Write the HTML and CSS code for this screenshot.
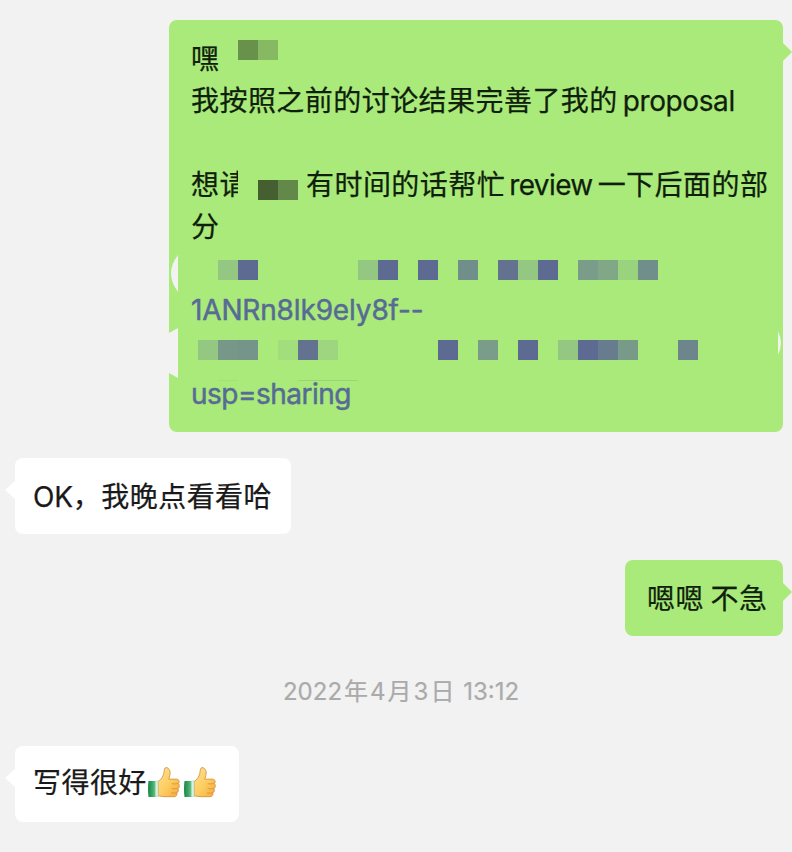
FILE: index.html
```html
<!DOCTYPE html>
<html lang="zh-CN">
<head>
<meta charset="utf-8">
<title>聊天</title>
<link rel="stylesheet" href="styles.css">
</head>
<body>
<main class="chat">
  <section class="row sent">
    <div class="bubble long">
      <p>嘿</p>
      <p>我按照之前的讨论结果完善了我的<span class="latin proposal">proposal</span></p>
      <p class="blank"></p>
      <p class="ask"><span class="lead">想请</span><span>有时间的话帮忙<span class="latin review">review</span>一下后面的部</span></p>
      <p>分</p>
      <p class="blank"></p>
      <p class="link id">1ANRn8lk9ely8f--</p>
      <p class="blank"></p>
      <p class="link usp">usp=sharing</p>
      <svg class="mosaic" viewBox="169 20 614 412" aria-hidden="true">
        <g shape-rendering="crispEdges">
          <path fill="#a9ea7a" d="M238 160h20v46h-20z"/>
          <path fill="#68914b" d="M238 40h20v20h-20z"/><path fill="#86b962" d="M258 40h20v20h-20z"/>
          <path fill="#455f31" d="M258 180h20v20h-20z"/><path fill="#62894a" d="M278 180h20v20h-20z"/>
          <path fill="#93c782" d="M218 260h20v20h-20zM358 260h20v20h-20zM518 260h20v20h-20zM198 340h20v20h-20zM558 340h20v20h-20z"/>
          <path fill="#5d6b92" d="M238 260h20v20h-20zM378 260h20v20h-20zM418 260h20v20h-20zM538 260h20v20h-20zM438 340h20v20h-20zM518 340h20v20h-20zM578 340h20v20h-20z"/>
          <path fill="#63728f" d="M498 260h20v20h-20zM298 340h20v20h-20z"/>
          <path fill="#718f8a" d="M458 260h20v20h-20zM638 260h20v20h-20z"/>
          <path fill="#7a9d89" d="M578 260h20v20h-20zM478 340h20v20h-20z"/>
          <path fill="#80a887" d="M598 260h20v20h-20z"/><path fill="#9ad37e" d="M618 260h20v20h-20z"/>
          <path fill="#779889" d="M218 340h20v20h-20z"/><path fill="#75958a" d="M238 340h20v20h-20z"/>
          <path fill="#a3de7d" d="M278 340h20v20h-20z"/><path fill="#9dd67e" d="M318 340h20v20h-20z"/>
          <path fill="#677c8f" d="M598 340h20v20h-20z"/><path fill="#779a89" d="M618 340h20v20h-20z"/>
          <path fill="#6c868b" d="M678 340h20v20h-20z"/>
          <path fill="#9cd578" d="M298 380h60v1h-60z"/><path fill="#a3e07a" d="M218 380h20v1h-20z"/>
        </g>
        <path fill="#f2f2f2" d="M178 255Q164 273 178 292zM169 333L178 328V378L169 373z"/>
        <path fill="#f2f2f2" d="M778 331Q784 343 778 355z"/>
      </svg>
    </div>
  </section>

  <section class="row received">
    <div class="bubble ok"><p><span class="latin okword">OK</span>，我晚点看看哈</p></div>
  </section>

  <section class="row sent">
    <div class="bubble reply"><p>嗯嗯 不急</p></div>
  </section>

  <time class="stamp">2022<span>年</span>4<span>月</span>3<span>日</span> 13:12</time>

  <section class="row received">
    <div class="bubble praise">
      <p>写得很好</p>
      <svg class="thumb" viewBox="0 0 32 32" role="img" aria-label="赞"><use href="#thumb"/></svg>
      <svg class="thumb" viewBox="0 0 32 32" role="img" aria-label="赞"><use href="#thumb"/></svg>
    </div>
  </section>
</main>

<svg class="defs" aria-hidden="true">
  <defs>
    <linearGradient id="skin" x1="0" y1="0" x2="1" y2="1"><stop offset="0" stop-color="#ffe397"/><stop offset=".55" stop-color="#fdcc5e"/><stop offset="1" stop-color="#f4a83c"/></linearGradient>
    <linearGradient id="cuff" x1="0" y1="0" x2="1" y2="0"><stop offset="0" stop-color="#168544"/><stop offset=".65" stop-color="#44ae69"/><stop offset="1" stop-color="#78c992"/></linearGradient>
    <g id="thumb">
      <path fill="url(#skin)" stroke="#cf8b39" stroke-width=".8" d="M10 15.5C13.5 13.7 16 9.5 16.2 4.8C16.3 2.2 17.5 1.2 19 1.7C22 2.7 22.7 6 21.8 9.5L20.8 13.2L28 13.1C31.5 13.1 32 16.5 30.1 17.5C32 19 31.6 21.8 29.8 22.5C31 24 30.3 26.3 28.7 26.8C29.5 29 28.2 30.7 26 30.7H18C15 30.7 13 30.2 10 29.8z"/>
      <path fill="none" stroke="#dc953c" stroke-width=".9" stroke-linecap="round" d="M24 17.8Q27 18.4 30 17.5M24 22.6Q27 23.2 29.8 22.5M23.5 27Q26 27.5 28.7 26.8"/>
      <path fill="url(#cuff)" d="M.5 15H7.8V31H.5Q-.5 23 .5 15z"/>
      <path fill="#d9efe0" stroke="#91c99f" stroke-width=".4" d="M7.4 15H10.2V30.5H7.4z"/>
    </g>
  </defs>
</svg>
</body>
</html>
```
FILE: styles.css
```css
* { box-sizing: border-box; }

body {
  margin: 0;
  background: #f2f2f2;
  color: #191919;
  font-family: "Noto Sans CJK SC", sans-serif;
  font-size: 28px;
  line-height: 42px;
  letter-spacing: 0.45px;
}

p { margin: 0; height: 42px; white-space: nowrap; }

.chat {
  display: flex;
  flex-direction: column;
  height: 852px;
  padding: 20px 9px 0 15px;
  overflow: hidden;
}

.row { display: flex; margin-bottom: 26px; }
.sent { justify-content: flex-end; }

.bubble {
  position: relative;
  padding: 16px 18px 18px;
  border-radius: 8px;
  background: #fff;
  -webkit-text-stroke: 0.25px currentColor;
}

.sent .bubble { background: #a9ea7a; color: #101f0c; padding-left: 22px; }

.bubble::before {
  content: "";
  position: absolute;
  top: 23px;
  left: -10px;
  width: 10px;
  height: 18px;
  background: inherit;
  clip-path: polygon(0 50%, 100% 0, 100% 100%);
}

.sent .bubble::before {
  left: auto;
  right: -9px;
  width: 9px;
  clip-path: polygon(0 0, 100% 50%, 0 100%);
}

.long { width: 614px; }
.ok { width: 276px; }
.reply { width: 158px; }
.praise { width: 224px; display: flex; padding-top: 14px; padding-bottom: 20px; }

.latin, .link { font-family: Inter, sans-serif; letter-spacing: -0.4px; }
.proposal { margin-left: 5px; }
.review { margin: 0 5px 0 4px; letter-spacing: -0.6px; }
.okword { letter-spacing: -0.2px; }

.ask { display: flex; }
.lead { flex: none; width: 115px; }

.link { color: #576b95; line-height: 45px; -webkit-text-stroke: 0.5px currentColor; }
.id { letter-spacing: -0.15px; }
.usp { letter-spacing: -0.5px; }

.mosaic { position: absolute; inset: 0; width: 614px; height: 412px; }

.stamp {
  align-self: center;
  margin: 6px 0 30px;
  height: 48px;
  line-height: 48px;
  padding-left: 4px;
  font-family: Inter, "Noto Sans CJK SC", sans-serif;
  font-size: 24px;
  letter-spacing: 0;
  color: #aaa;
  -webkit-text-stroke: 0.2px currentColor;
}

.stamp span { margin: 0 2px; }

.thumb { width: 32px; height: 32px; margin: 6px 4px 0 0; flex: none; }
.praise p { margin-right: 1.5px; }
.defs { position: absolute; width: 0; height: 0; }
```
